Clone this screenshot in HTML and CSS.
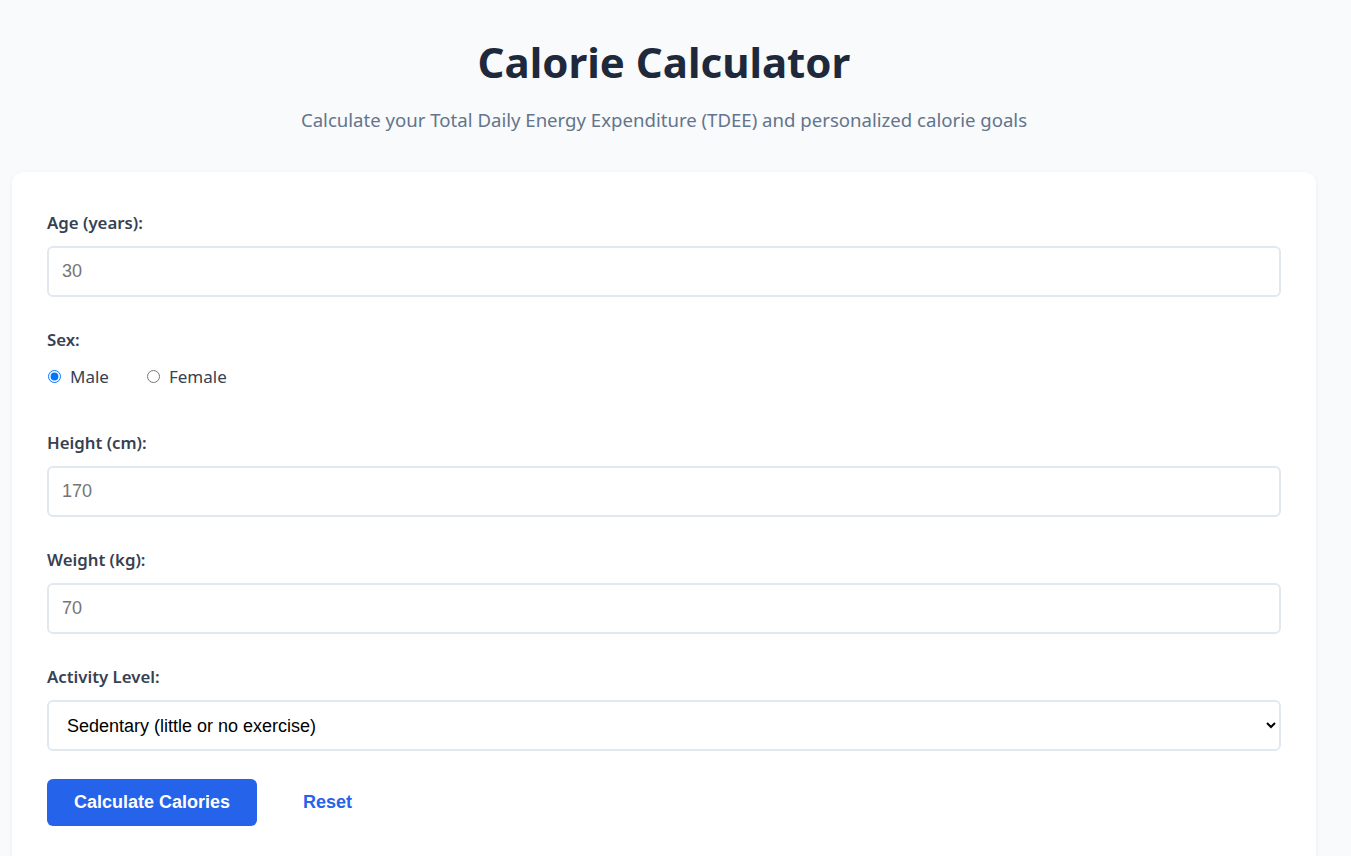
FILE: index.html
```html
<!DOCTYPE html>
<html lang="en">
<head>
<meta charset="utf-8">
<title>Calorie Calculator</title>
<link rel="stylesheet" href="styles.css">
</head>
<body>
<div class="page">
  <header class="header">
    <h1 class="title">Calorie Calculator</h1>
    <p class="subtitle">Calculate your Total Daily Energy Expenditure (TDEE) and personalized calorie goals</p>
  </header>
  <main class="card">
    <div class="group">
      <label class="label" for="age">Age (years):</label>
      <input class="field" id="age" type="number" placeholder="30">
    </div>
    <div class="group group-radio">
      <span class="label">Sex:</span>
      <div class="radios">
        <label class="radio"><input type="radio" name="sex" checked> Male</label>
        <label class="radio"><input type="radio" name="sex"> Female</label>
      </div>
    </div>
    <div class="group">
      <label class="label" for="height">Height (cm):</label>
      <input class="field" id="height" type="number" placeholder="170">
    </div>
    <div class="group">
      <label class="label" for="weight">Weight (kg):</label>
      <input class="field" id="weight" type="number" placeholder="70">
    </div>
    <div class="group group-last">
      <label class="label" for="activity">Activity Level:</label>
      <select class="field select" id="activity">
        <option>Sedentary (little or no exercise)</option>
        <option>Lightly active (light exercise 1-3 days/week)</option>
        <option>Moderately active (moderate exercise 3-5 days/week)</option>
        <option>Very active (hard exercise 6-7 days/week)</option>
        <option>Extra active (very hard exercise &amp; physical job)</option>
      </select>
    </div>
    <div class="actions">
      <button class="btn btn-primary" type="button">Calculate Calories</button>
      <button class="btn btn-link" type="button">Reset</button>
    </div>
  </main>
</div>
</body>
</html>
```

FILE: styles.css
```css
* { box-sizing: border-box; }
html, body { margin: 0; padding: 0; }
body {
  background: #f8fafc;
  font-family: "Noto Sans", "Segoe UI", sans-serif;
  color: #374151;
  overflow: hidden;
}
.page {
  max-width: 1328px;
  padding: 0 12px;
}
.header {
  text-align: center;
  padding-top: 34px;
  padding-bottom: 38px;
}
.title {
  margin: 0;
  font-size: 42px;
  line-height: 56px;
  font-weight: 700;
  color: #1e293b;
}
.subtitle {
  margin: 16px 0 0;
  font-size: 18.6px;
  line-height: 28px;
  color: #64748b;
}
.card {
  background: #ffffff;
  border-radius: 12px;
  box-shadow: 0 1px 4px rgba(15, 23, 42, 0.06);
  padding: 39px 35px 40px;
  min-height: 700px;
}
.group {
  display: flex;
  flex-direction: column;
  margin-bottom: 31px;
}
.group-radio { margin-bottom: 43px; }
.group-last { margin-bottom: 28px; }
.label {
  font-size: 16.8px;
  line-height: 24px;
  font-weight: 600;
  color: #374151;
  margin-bottom: 11px;
}
.field {
  height: 51px;
  flex: 0 0 51px;
  border: 2px solid #e2e8f0;
  border-radius: 6px;
  padding: 0 13px;
  font-family: "Liberation Sans", Arial, sans-serif;
  font-size: 18px;
  color: #111827;
  background: #ffffff;
  width: 100%;
}
.field::placeholder { color: #757575; }
.select {
  padding: 0 12px 0 14px;
  color: #000000;
  font-size: 18px;
}
.radios {
  display: flex;
  gap: 37px;
  height: 24px;
  align-items: center;
  margin-top: 1px;
}
.radio {
  display: flex;
  align-items: center;
  gap: 9px;
  font-size: 17px;
  color: #374151;
}
.radio input { margin: 0 0 0 1px; width: 13px; height: 13px; }
.actions {
  display: flex;
  gap: 19px;
  align-items: center;
}
.btn {
  font-family: "Liberation Sans", Arial, sans-serif;
  font-size: 18px;
  font-weight: 700;
  border: none;
  border-radius: 6px;
  padding: 0 27px;
  height: 47px;
  cursor: pointer;
}
.btn-primary {
  background: #2563eb;
  color: #ffffff;
}
.btn-link {
  background: transparent;
  color: #2563eb;
}
```
